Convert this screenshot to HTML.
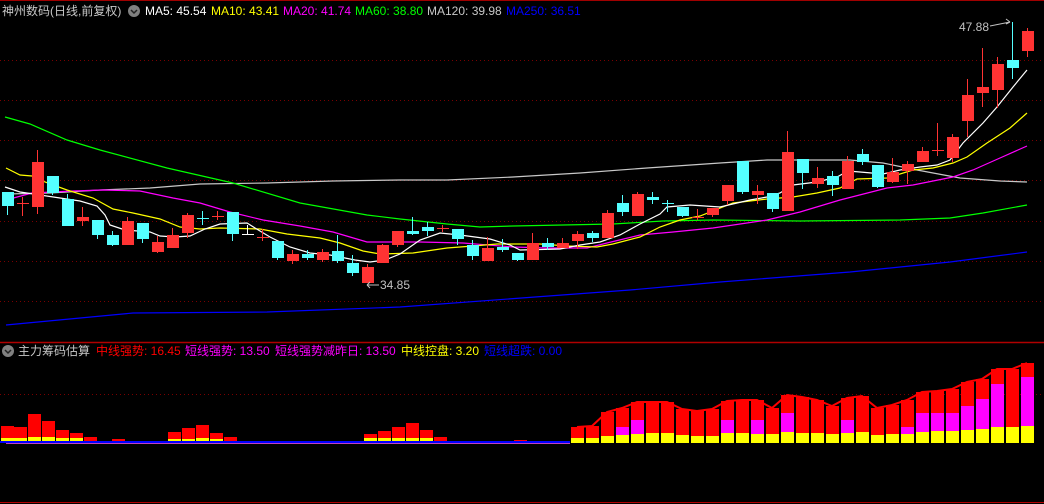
<!DOCTYPE html>
<html><head><meta charset="utf-8">
<style>
html,body{margin:0;padding:0;background:#000;width:1044px;height:504px;overflow:hidden}
body{position:relative;font-family:"Liberation Sans","Noto Sans CJK SC",sans-serif;font-size:12px}
.t{position:absolute;white-space:nowrap;line-height:14px}
svg{position:absolute;left:0;top:0}
</style></head><body>
<svg id="s" width="1044" height="504" xmlns="http://www.w3.org/2000/svg">
<g stroke="#7a0000" stroke-width="1" stroke-dasharray="1,3">
<line x1="0" y1="60.5" x2="1044" y2="60.5"/><line x1="0" y1="100.5" x2="1044" y2="100.5"/>
<line x1="0" y1="140.5" x2="1044" y2="140.5"/><line x1="0" y1="180.5" x2="1044" y2="180.5"/>
<line x1="0" y1="221.5" x2="1044" y2="221.5"/><line x1="0" y1="261.5" x2="1044" y2="261.5"/>
<line x1="0" y1="301.5" x2="1044" y2="301.5"/><line x1="0" y1="394.5" x2="1044" y2="394.5"/>
</g>
<line x1="0" y1="0.5" x2="1044" y2="0.5" stroke="#a00000"/>
<line x1="0" y1="342.5" x2="1044" y2="342.5" stroke="#b00000" stroke-width="1.5"/>
<line x1="0" y1="502.5" x2="1044" y2="502.5" stroke="#b00000"/>
<g id="ma" fill="none" stroke-width="1.2">
<polyline stroke="#0000ff" points="6,325 133,313 267,312 400,307 630,290 720,282 850,272 950,262 1027,252"/>
<polyline stroke="#c8c8c8" points="6,194 50,193 100,190 150,188 200,184 267,183 333,181 400,180 447,180 513,177 580,173 647,168 720,163 767,160 850,160 883,163 917,170 960,178 1000,181 1027,182"/>
<polyline stroke="#00ff00" points="5,117 30,124 67,140 100,150 167,168 233,183 300,203 367,215 400,219 447,224 480,227 513,226 613,224 663,221 713,220 800,221 900,220 950,218 983,213 1027,205"/>
<polyline stroke="#ff00ff" points="6,200 32,193 73,191 103,190 140,191 173,198 200,203 230,212 263,220 300,226 333,232 367,242 420,242 463,243 513,247 547,248 587,248 607,243 640,235 673,232 713,228 767,220 800,212 840,200 887,188 913,185 953,177 973,170 1000,158 1027,146"/>
<polyline stroke="#ffff00" points="6,168 20,175 32,176 45,182 67,190 93,198 113,209 133,213 160,219 180,227 200,229 220,228 260,229 287,234 320,238 340,243 363,251 380,254 413,253 447,248 473,246 497,244 540,244 567,246 597,247 613,244 640,237 660,227 680,220 700,216 733,203 767,199 793,197 817,193 840,188 857,179 887,178 913,170 933,168 953,163 967,157 987,143 1010,128 1027,113"/>
<polyline stroke="#ffffff" points="5,187 20,192 60,198 80,201 97,206 105,215 110,225 125,230 150,232 160,236 175,237 190,236 205,229 220,224 247,223 255,228 270,237 290,247 310,253 330,255 355,260 370,262 385,260 400,254 420,240 440,233 460,235 490,239 510,245 520,250 560,249 580,245 600,242 620,235 640,224 660,214 667,207 690,205 720,207 750,200 767,197 780,193 793,185 817,182 837,177 848,171 860,172 883,174 900,170 920,167 937,165 950,160 963,143 983,123 997,107 1013,87 1027,70"/>
</g>
<g id="c"></g>
<g id="b"></g>
<line x1="0" y1="442" x2="570" y2="442" stroke="#0000ff" stroke-width="2"/>
<line x1="6" y1="443.5" x2="570" y2="443.5" stroke="#c040c0" stroke-width="1"/>
<g stroke="#c0c0c0" fill="none"><path d="M367,285 L379,285 M367,285 l3,-3 M367,285 l3,3"/><path d="M990,26 L1010,22 M1010,22 l-4,-3 M1010,22 l-4,2"/></g>
<circle cx="134" cy="11" r="6" fill="#808080"/><path d="M131,10 l3,3 l3,-3" stroke="#222" fill="none" stroke-width="1.5"/>
<circle cx="8" cy="351" r="6" fill="#808080"/><path d="M5,350 l3,3 l3,-3" stroke="#222" fill="none" stroke-width="1.5"/>
</svg>
<div class="t" style="left:2px;top:4px;color:#c8c8c8">神州数码(日线,前复权)</div>
<div class="t" style="left:145px;top:4px;color:#fff">MA5: 45.54</div>
<div class="t" style="left:211px;top:4px;color:#ffff00">MA10: 43.41</div>
<div class="t" style="left:283px;top:4px;color:#ff00ff">MA20: 41.74</div>
<div class="t" style="left:355px;top:4px;color:#00ff00">MA60: 38.80</div>
<div class="t" style="left:427px;top:4px;color:#c8c8c8">MA120: 39.98</div>
<div class="t" style="left:506px;top:4px;color:#0000ff">MA250: 36.51</div>
<div class="t" style="left:380px;top:278px;color:#c0c0c0">34.85</div>
<div class="t" style="left:959px;top:20px;color:#c0c0c0">47.88</div>
<div class="t" style="left:18px;top:344px;color:#c8c8c8">主力筹码估算</div>
<div class="t" style="left:96px;top:344px;color:#ff0000">中线强势: 16.45</div>
<div class="t" style="left:185px;top:344px;color:#ff00ff">短线强势: 13.50</div>
<div class="t" style="left:275px;top:344px;color:#ff00ff">短线强势减昨日: 13.50</div>
<div class="t" style="left:401px;top:344px;color:#ffff00">中线控盘: 3.20</div>
<div class="t" style="left:484px;top:344px;color:#0000ff">短线超跌: 0.00</div>
<script>
var C=[[7,192,206,192,215,'c'],[22,203,204,197,216,'r'],[37,162,207,150,214,'r'],[52,176,193,176,195,'c'],[67,199,226,194,226,'c'],[82,217,221,207,226,'r'],[97,220,235,220,239,'c'],[112,235,245,231,246,'c'],[127,221,245,217,245,'r'],[142,223,239,223,243,'c'],[157,242,252,236,253,'r'],[172,235,248,228,248,'r'],[187,215,233,213,238,'r'],[202,218,219,211,225,'c'],[217,216,217,211,220,'r'],[232,212,234,212,241,'c'],[247,234,235,225,235,'w'],[262,237,238,229,241,'r'],[277,241,258,241,260,'c'],[292,254,261,250,264,'r'],[307,254,258,250,260,'c'],[322,252,260,249,262,'r'],[337,251,261,235,263,'c'],[352,263,273,255,276,'c'],[367,267,283,264,283,'r'],[382,245,263,244,263,'r'],[397,231,245,231,247,'r'],[412,231,234,217,235,'c'],[427,227,231,222,236,'c'],[442,228,229,225,232,'r'],[457,229,239,229,245,'c'],[472,245,256,240,260,'c'],[487,248,261,237,261,'r'],[502,247,250,239,252,'c'],[517,253,260,253,261,'c'],[532,243,260,233,260,'r'],[547,243,247,238,250,'c'],[562,243,248,238,248,'r'],[577,234,241,231,249,'r'],[592,233,238,231,242,'c'],[607,213,238,210,238,'r'],[622,203,212,195,216,'c'],[637,194,216,192,216,'r'],[652,197,200,192,204,'c'],[667,203,204,200,212,'c'],[682,207,216,207,217,'c'],[697,217,218,209,220,'r'],[712,208,215,208,217,'r'],[727,185,201,185,205,'r'],[742,161,192,161,194,'c'],[757,191,195,185,204,'r'],[772,193,209,193,212,'c'],[787,152,211,131,211,'r'],[802,159,173,159,189,'c'],[817,178,184,167,188,'r'],[832,176,185,171,196,'c'],[847,161,189,156,189,'r'],[862,154,162,149,165,'c'],[877,165,187,165,188,'c'],[892,172,182,158,183,'r'],[907,164,171,161,184,'r'],[922,151,162,147,162,'r'],[937,150,151,123,156,'r'],[952,137,158,134,162,'r'],[967,95,121,79,137,'r'],[982,87,93,48,107,'r'],[997,64,90,57,108,'r'],[1012,60,68,22,79,'c'],[1027,31,51,28,57,'r']];
var col={r:'#ff3333',c:'#54ffff',w:'#ffffff'};var h='';
C.forEach(function(d){var c=col[d[5]];h+='<line x1="'+(d[0]+.5)+'" y1="'+d[3]+'" x2="'+(d[0]+.5)+'" y2="'+d[4]+'" stroke="'+c+'"/>';var bh=Math.max(1,d[2]-d[1]);h+='<rect x="'+(d[0]-5)+'" y="'+d[1]+'" width="12" height="'+bh+'" fill="'+c+'"/>';});
document.getElementById('c').innerHTML=h;
var B=[[1,426,0,438],[14,427,0,438],[28,414,0,437],[42,421,0,437],[56,430,0,438],[70,433,0,438],[84,437,0,441],[112,439,0,441],[168,432,0,439],[182,428,0,439],[196,425,0,438],[210,433,0,439],[224,437,0,441],[364,434,0,438],[378,431,0,438],[392,427,0,438],[406,423,0,438],[420,430,0,438],[434,437,0,441],[514,440,0,442],
[571,427,0,438],[586,426,0,438],[601,412,0,436],[616,408,427,435],[631,402,420,434],[646,402,0,433],[661,402,0,433],[676,409,0,435],[691,411,0,436],[706,409,0,436],[721,401,420,433],[736,400,0,433],[751,400,420,434],[766,408,0,434],[781,395,413,432],[796,397,0,433],[811,400,0,433],[826,406,0,434],[841,398,420,433],[856,396,0,432],[871,408,0,435],[886,405,0,434],[901,400,427,434],[916,392,413,432],[931,391,413,431],[946,389,413,431],[961,382,406,430],[976,379,399,429],[991,369,384,427],[1006,369,0,427],[1021,363,377,426]];
var g='',pts=[];
B.forEach(function(d){var w=13;g+='<rect x="'+d[0]+'" y="'+d[1]+'" width="'+w+'" height="'+(443-d[1])+'" fill="#ff0000"/>';if(d[2])g+='<rect x="'+d[0]+'" y="'+d[2]+'" width="'+w+'" height="'+(443-d[2])+'" fill="#ff00ff"/>';g+='<rect x="'+d[0]+'" y="'+d[3]+'" width="'+w+'" height="'+(443-d[3])+'" fill="#ffff00"/>';if(d[0]>=571)pts.push((d[0]+6)+','+d[1]);});
g+='<polyline points="'+pts.join(' ')+'" fill="none" stroke="#ff0000" stroke-width="2"/>';
document.getElementById('b').innerHTML=g;
</script>
</body></html>
